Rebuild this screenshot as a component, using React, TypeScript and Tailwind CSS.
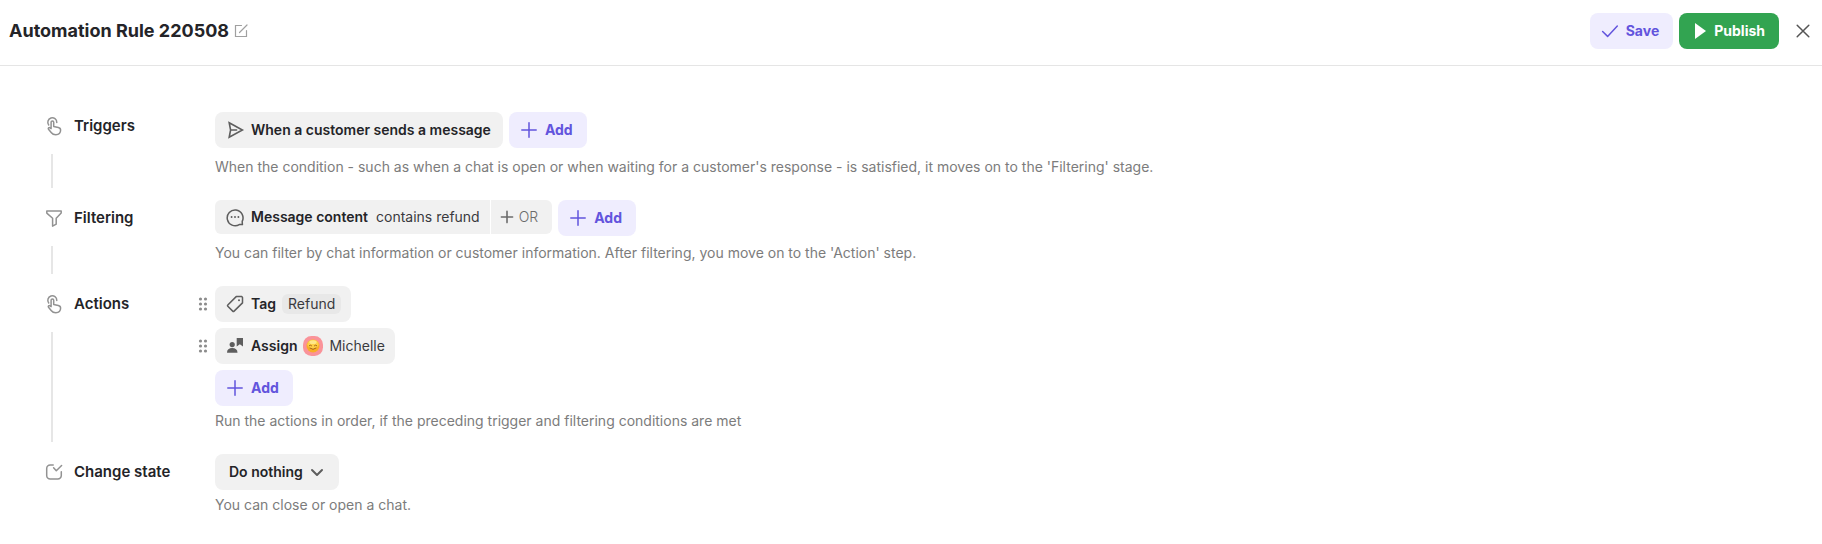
import type { ReactNode } from "react";

const stroke = {
  fill: "none",
  stroke: "currentColor",
  strokeLinecap: "round" as const,
  strokeLinejoin: "round" as const,
  "aria-hidden": true,
};

function TapIcon() {
  return (
    <svg width="20" height="20" viewBox="0 0 20 20" strokeWidth="1.5" {...stroke}>
      <path d="M4.700 9A4.500 4.500 0 1 1 12.800 6.400" />
      <path d="M7.100 12.600V6.300a1.300 1.300 0 0 1 2.600 0v4.200l4.600.9a2.800 2.800 0 0 1 2.300 2.700c0 2.900-1.900 4.700-4.800 4.700-2 0-3.400-.7-4.400-2.100l-2.900-3.500c-.7-1 .5-2 1.400-1.400z" />
    </svg>
  );
}

function FunnelIcon() {
  return (
    <svg width="20" height="20" viewBox="0 0 20 20" strokeWidth="1.5" {...stroke}>
      <path d="M2.800 2.900h14.400v2.200l-5 5.200v5.900l-3.600 1.900v-7.800l-5.800-5.200z" />
    </svg>
  );
}

function StateIcon() {
  return (
    <svg width="20" height="20" viewBox="0 0 20 20" strokeWidth="1.5" {...stroke}>
      <path d="M9.200 2.900H6.200a3.500 3.500 0 0 0-3.500 3.500v7.200a3.500 3.500 0 0 0 3.500 3.500h7.600a3.500 3.500 0 0 0 3.500-3.500V9.800" />
      <path d="M9.600 5.700l2.700 3.100 5.300-5.300" />
    </svg>
  );
}

function PlusIcon() {
  return (
    <svg width="20" height="20" viewBox="0 0 20 20" strokeWidth="1.5" {...stroke}>
      <path d="M10 2.800v14.400M2.800 10h14.400" />
    </svg>
  );
}

function SendIcon() {
  return (
    <svg width="20" height="20" viewBox="0 0 20 20" strokeWidth="1.600" {...stroke} strokeLinejoin="miter">
      <path d="M4.200 2.700l13.200 7.300-13.200 7.300 1.400-7.300zM5.600 10h6" />
    </svg>
  );
}

function MessageIcon() {
  return (
    <svg width="20" height="20" viewBox="0 0 20 20" strokeWidth="1.500" {...stroke}>
      <path d="M17.400 17.600h-3.100a7.900 7.900 0 1 1 2.900-3.200z" />
      <path d="M6.600 10h.01M10 10h.01M13.400 10h.01" strokeWidth="1.900" />
    </svg>
  );
}

function TagIcon() {
  return (
    <svg width="20" height="20" viewBox="0 0 20 20" strokeWidth="1.500" {...stroke}>
      <path d="M11.200 2.600h5.500l.8.900v5.400l-8.400 8.200a1 1 0 0 1-1.400 0L2.800 12.300a1 1 0 0 1 0-1.400z" />
      <path d="M14 6.200h.01" strokeWidth="2" />
    </svg>
  );
}

function AssignIcon() {
  return (
    <svg width="20" height="20" viewBox="0 0 20 20" fill="currentColor" aria-hidden="true">
      <circle cx="7.200" cy="8.600" r="2.600" />
      <path d="M2 16.700c0-3 2-4.600 5.200-4.600s5.300 1.600 5.300 4.600z" />
      <path d="M11.700 2H18v8.600l-3.150-2.300-3.150 2.300z" />
    </svg>
  );
}

function HandleIcon() {
  return (
    <svg width="10" height="14" viewBox="0 0 10 14" fill="currentColor" aria-hidden="true">
      <circle cx="2.500" cy="2" r="1.600" />
      <circle cx="7.500" cy="2" r="1.600" />
      <circle cx="2.500" cy="7" r="1.600" />
      <circle cx="7.500" cy="7" r="1.600" />
      <circle cx="2.500" cy="12" r="1.600" />
      <circle cx="7.500" cy="12" r="1.600" />
    </svg>
  );
}

function Avatar() {
  return (
    <svg width="20" height="20" viewBox="0 0 20 20" aria-hidden="true">
      <rect width="20" height="20" rx="8.500" fill="#fa9399" />
      <circle cx="10" cy="10" r="6.500" fill="#f9ae25" />
      <ellipse cx="10" cy="8.300" rx="5.600" ry="4.600" fill="#fdcf45" />
      <ellipse cx="10" cy="6.200" rx="3.600" ry="1.900" fill="#fee889" />
      <g fill="none" stroke="#9a5714" strokeWidth=".9" strokeLinecap="round">
        <path d="M6.200 9.700q1.200-1.300 2.400 0M11.400 9.700q1.200-1.300 2.400 0" />
        <path d="M6.900 12.100q3.100 2.700 6.200 0" />
      </g>
    </svg>
  );
}

function AddButton() {
  return (
    <button type="button" className="flex h-9 items-center gap-1.5 rounded-lg bg-[#efedfe] pr-3.5 pl-2.5 font-bold text-[#6254dd]">
      <PlusIcon />
      Add
    </button>
  );
}

function ActionChip({ icon, name, children }: { icon: ReactNode; name: string; children: ReactNode }) {
  return (
    <li className="-ml-[17px] flex items-center gap-[7px]">
      <button type="button" aria-label={`Reorder ${name}`} className="w-2.5 text-[#8c8c8c]">
        <HandleIcon />
      </button>
      <button type="button" className="flex h-9 items-center gap-1.5 rounded-lg bg-[#f1f1f1] px-2.5">
        <span className="text-[#5e5e5e]">{icon}</span>
        <span className="font-semibold">{name}</span>
        {children}
      </button>
    </li>
  );
}

type StageProps = {
  icon: ReactNode;
  title: string;
  hint: string;
  hintClass: string;
  headClass?: string;
  last?: boolean;
  children: ReactNode;
};

function Stage({ icon, title, hint, hintClass, headClass = "mb-2.5 h-9", last = false, children }: StageProps) {
  return (
    <section className="flex">
      <div className="flex w-[171px] shrink-0 flex-col">
        <div className={`flex items-center gap-2.5 ${headClass}`}>
          <span className="text-[#929292]">{icon}</span>
          <h2 className="text-[15px] font-semibold">{title}</h2>
        </div>
        {!last && <div className="mb-3 ml-[7px] w-0.5 flex-1 bg-[#e6e6e6]" />}
      </div>
      <div className="min-w-0 pb-[23px]">
        {children}
        <p className={`leading-5 text-[#7c7c7c] ${hintClass}`}>{hint}</p>
      </div>
    </section>
  );
}

export default function App() {
  return (
    <div className="min-h-screen bg-white font-['Inter',sans-serif] text-sm text-[#242428]">
      <header className="flex items-center border-b border-[#e5e5e5] pt-[13px] pr-[11px] pb-4 pl-[9px]">
        <h1 className="text-lg font-bold">Automation Rule 220508</h1>
        <button type="button" aria-label="Rename" className="ml-[5px] text-[#a0a0a0]">
          <svg width="14" height="14" viewBox="0 0 14 14" strokeWidth="1.200" {...stroke} strokeLinejoin="miter">
            <path d="M7.500 1.500h-6v11h11v-6M5.500 8.500l7.500-7.500" />
          </svg>
        </button>
        <div className="ml-auto flex items-center gap-1.5">
          <button type="button" className="flex h-9 items-center gap-1.5 rounded-lg bg-[#efedfe] pr-3.5 pl-2.5 font-bold text-[#6254dd]">
            <svg width="20" height="20" viewBox="0 0 20 20" strokeWidth="1.500" {...stroke}>
              <path d="M2.600 10.500l5 4.900L17.300 5" />
            </svg>
            Save
          </button>
          <button type="button" className="flex h-9 items-center gap-2 rounded-lg bg-[#32a451] pr-3.5 pl-4 font-bold text-white">
            <svg width="11" height="16" viewBox="0 0 11 16" fill="currentColor" aria-hidden="true">
              <path d="M0 0l11 8-11 8z" />
            </svg>
            Publish
          </button>
          <button type="button" aria-label="Close" className="ml-2.5 text-[#555555]">
            <svg width="16" height="16" viewBox="0 0 16 16" strokeWidth="1.500" {...stroke}>
              <path d="M2.200 2.200l11.600 11.600M13.800 2.200L2.200 13.800" />
            </svg>
          </button>
        </div>
      </header>

      <main className="pt-[46px] pl-11">
        <Stage
          icon={<TapIcon />}
          title="Triggers"
          headClass="mb-3.5 h-7"
          hintClass="mt-[9px]"
          hint="When the condition - such as when a chat is open or when waiting for a customer's response - is satisfied, it moves on to the 'Filtering' stage."
        >
          <div className="flex gap-1.5">
            <button type="button" className="flex h-9 items-center gap-1.5 rounded-lg bg-[#f1f1f1] pr-3 pl-2.5 font-semibold">
              <span className="text-[#5e5e5e]">
                <SendIcon />
              </span>
              When a customer sends a message
            </button>
            <AddButton />
          </div>
        </Stage>

        <Stage
          icon={<FunnelIcon />}
          title="Filtering"
          hintClass="mt-[7px]"
          hint="You can filter by chat information or customer information. After filtering, you move on to the 'Action' step."
        >
          <div className="flex items-start gap-1.5">
            <div className="flex gap-px">
              <button type="button" className="flex h-[34px] items-center gap-1.5 rounded-l-md bg-[#f1f1f1] px-2.5">
                <span className="text-[#5e5e5e]">
                  <MessageIcon />
                </span>
                <span className="mr-0.5 font-semibold">Message content</span>
                <span className="text-[#3a3a3e]">contains refund</span>
              </button>
              <button type="button" className="flex h-[34px] items-center gap-1 rounded-r-md bg-[#f1f1f1] pr-3.5 pl-2 font-light text-[#6b6b6b]">
                <svg width="16" height="16" viewBox="0 0 16 16" strokeWidth="1.600" {...stroke}>
                  <path d="M8 2.400v11.200M2.400 8h11.200" />
                </svg>
                OR
              </button>
            </div>
            <AddButton />
          </div>
        </Stage>

        <Stage
          icon={<TapIcon />}
          title="Actions"
          hintClass="mt-[5px]"
          hint="Run the actions in order, if the preceding trigger and filtering conditions are met"
        >
          <ul className="mb-1.5 flex flex-col gap-1.5">
            <ActionChip icon={<TagIcon />} name="Tag">
              <span className="rounded-md bg-[#e8e8e8] px-1.5 leading-5 text-[#3a3a3e]">Refund</span>
            </ActionChip>
            <ActionChip icon={<AssignIcon />} name="Assign">
              <Avatar />
              <span className="text-[#3a3a3e]">Michelle</span>
            </ActionChip>
          </ul>
          <AddButton />
        </Stage>

        <Stage icon={<StateIcon />} title="Change state" hintClass="mt-[5px]" hint="You can close or open a chat." last>
          <div className="relative inline-flex">
            <select aria-label="Change state" className="h-9 appearance-none rounded-lg bg-[#f1f1f1] pr-9 pl-3.5 font-semibold">
              <option>Do nothing</option>
            </select>
            <svg
              className="pointer-events-none absolute top-2.5 right-3.5 text-[#5e5e5e]"
              width="16"
              height="16"
              viewBox="0 0 16 16"
              strokeWidth="2"
              {...stroke}
            >
              <path d="M3 6l5 5 5-5" />
            </svg>
          </div>
        </Stage>
      </main>
    </div>
  );
}
